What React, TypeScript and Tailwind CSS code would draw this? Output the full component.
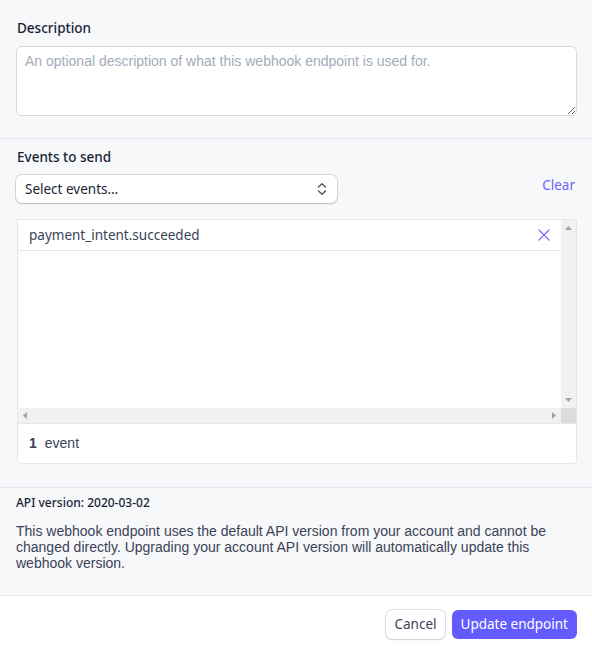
import React from "react";

const ui = { fontFamily: '"Noto Sans", "Open Sans", sans-serif' };
const arial = { fontFamily: '"Liberation Sans", Arial, sans-serif' };

function Tri({ dir }: { dir: "up" | "down" | "left" | "right" }) {
  const paths: Record<string, string> = {
    up: "M0 4L3.5 0L7 4Z",
    down: "M0 0L7 0L3.5 4Z",
    left: "M4 0L4 7L0 3.5Z",
    right: "M0 0L4 3.5L0 7Z",
  };
  const vert = dir === "up" || dir === "down";
  return (
    <svg width={vert ? 7 : 4} height={vert ? 4 : 7} viewBox={vert ? "0 0 7 4" : "0 0 4 7"}>
      <path d={paths[dir]} fill="#a3a3a3" />
    </svg>
  );
}

export default function App() {
  return (
    <div className="w-[592px] min-h-[654px] bg-[#f6f8fa] flex flex-col text-[#1a1f36]">
      <section className="px-4 pt-[18px] pb-[22px] border-b border-[#e3e8ee]">
        <div className="text-[13.5px] leading-[20px] font-medium text-[#1a1f36] pl-px" style={ui}>
          Description
        </div>
        <textarea
          className="mt-2 block w-[561px] h-[70px] rounded-[6px] border border-[#d5dae0] bg-white px-2 py-[4px] text-[14px] leading-[20px] text-[#3c4257] placeholder:text-[#a3acb9] outline-none"
          style={arial}
          placeholder="An optional description of what this webhook endpoint is used for."
        />
      </section>

      <section className="px-4 pt-2 pb-[23px] border-b border-[#e3e8ee]">
        <div className="text-[13.5px] leading-[20px] font-medium text-[#1a1f36] pl-px" style={ui}>
          Events to send
        </div>
        <div className="mt-2 flex items-start justify-between">
          <button
            className="w-[321px] h-[28px] rounded-[6px] bg-white flex items-center justify-between pl-[9px] pr-[9px] shadow-[0_0_0_1px_rgba(60,66,87,0.16),0_1px_2px_rgba(0,0,0,0.14)]"
            style={ui}
          >
            <span className="text-[13.5px] text-[#1a1f36]">Select events…</span>
            <svg width="12" height="14" viewBox="0 0 12 14" fill="none" stroke="#4f566b" strokeWidth="1.4" strokeLinecap="round" strokeLinejoin="round">
              <path d="M2.5 5L6 1.8 9.5 5" />
              <path d="M2.5 9L6 12.2 9.5 9" />
            </svg>
          </button>
          <button className="text-[13.5px] leading-[20px] text-[#6b63ff] pr-px" style={ui}>
            Clear
          </button>
        </div>

        <div className="mt-4 ml-px w-[560px] border border-[#e3e8ee] rounded-b-[4px] bg-white overflow-hidden">
          <div className="flex h-[188px]">
            <div className="flex-1">
              <div className="h-[31px] border-b border-[#e3e8ee] flex items-center justify-between pl-[11px] pr-[11px]">
                <span className="text-[13.5px] text-[#3c4257]" style={ui}>
                  payment_intent.succeeded
                </span>
                <svg width="12" height="12" viewBox="0 0 12 12" fill="none" stroke="#7a73ff" strokeWidth="1.3" strokeLinecap="round">
                  <path d="M1 1L11 11M11 1L1 11" />
                </svg>
              </div>
            </div>
            <div className="w-[15px] bg-[#f1f1f1] flex flex-col justify-between items-center pt-[6px] pb-[6px]">
              <Tri dir="up" />
              <Tri dir="down" />
            </div>
          </div>
          <div className="flex h-[15px]">
            <div className="flex-1 bg-[#f1f1f1] flex items-center justify-between pl-[5px] pr-[5px]">
              <Tri dir="left" />
              <Tri dir="right" />
            </div>
            <div className="w-[15px] bg-[#dcdcdc]" />
          </div>
          <div className="h-[40px] border-t border-[#e3e8ee] flex items-center pl-[11px] text-[14px] text-[#3c4257]" style={arial}>
            <span className="font-bold">1</span>
            <span className="ml-[8px]">event</span>
          </div>
        </div>
      </section>

      <section className="px-4 pt-[7px] pb-[24px] border-b border-[#e3e8ee]">
        <div className="text-[12px] leading-[16px] text-[#1a1f36] font-medium" style={ui}>
          API version: 2020-03-02
        </div>
        <p className="mt-3 text-[14px] leading-[16px] text-[#3c4257]" style={arial}>
          This webhook endpoint uses the default API version from your account and cannot be changed directly. Upgrading your account API version will automatically update this webhook version.
        </p>
      </section>

      <footer className="flex-1 bg-white flex justify-end items-start gap-[7px] pt-[14px] pr-[15px]" style={ui}>
        <button className="h-[29px] px-[8px] rounded-[6px] bg-white text-[13.5px] text-[#3c4257] shadow-[0_0_0_1px_rgba(60,66,87,0.16),0_1px_2px_rgba(0,0,0,0.1)]">
          Cancel
        </button>
        <button className="h-[29px] px-[9px] rounded-[6px] bg-[#635bff] text-[13.5px] text-white">
          Update endpoint
        </button>
      </footer>
    </div>
  );
}
